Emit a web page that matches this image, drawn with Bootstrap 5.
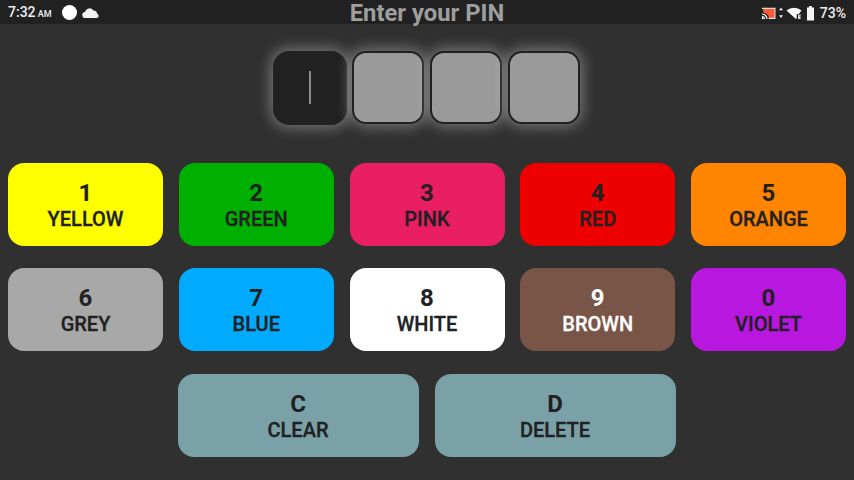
<!DOCTYPE html>
<html><head><meta charset="utf-8">
<link href="https://cdn.jsdelivr.net/npm/bootstrap@5.3.0/dist/css/bootstrap.min.css" rel="stylesheet">
<style>
html,body{margin:0;height:480px;overflow:hidden;background:#303030;font-family:Roboto,sans-serif}
.stat{height:24px;background:#212121;color:#eee;padding:0 8px}
.sideL,.sideR{flex:1 1 0;font-size:14px;font-weight:500;line-height:18px;padding-top:1px}
.clock small{font-size:9px;font-weight:500}
.ttl{font-size:23.800px;font-weight:700;color:#9e9e9e;line-height:28px;height:28px;text-align:center;white-space:nowrap;margin-top:-1.500px;margin-bottom:-2.500px}
.pinrow{padding-top:27px;height:138.500px;gap:6px}
.pinbox{width:72px;height:73px;border:2px solid #212121;border-radius:14px;background:#9a9a9a;box-shadow:0 0 14px 3px rgba(255,255,255,.33)}
.pinbox.act{background:#212121;width:74px;height:74px;margin-right:-1px;margin-left:-1px;margin-top:-.5px;border-radius:16px;border-color:#222}
.caret{width:2px;height:33px;background:#8a8a8a}
.keys{padding:0 8px;gap:22.500px}
.keyline{gap:15.750px}
.keyline3{justify-content:center;gap:16px;margin-left:-1px}
.kbtn{width:155px;height:83px;border-radius:16px;font-weight:700;color:#212121;padding-top:17px;text-align:center;flex:none}
.kbtn .dg{display:block;font-size:24px;line-height:26px}
.kbtn .lb{display:block;font-size:20px;line-height:26px;font-weight:500;-webkit-text-stroke:.3px currentColor}
.kbtn.wide{width:241px;background:#7aa0a8}
.wl{color:#fff}
.b1{background:#ff0}.b2{background:#00b000}.b3{background:#e91e63}.b4{background:#e00}.b5{background:#ff8400}
.b6{background:#a8a8a8}.b7{background:#0af}.b8{background:#fff}.b9{background:#795548}.b0{background:#b817e0}
</style></head><body>
<div class="stat d-flex">
<div class="sideL d-flex align-items-center" style="gap:10px">
<div class="clock">7:32<small> AM</small></div>
<svg width="38" height="16" viewBox="0 0 38 16"><circle cx="7.500" cy="7.500" r="7.500" fill="#fff"/><path d="M23.500 13a3 3 0 0 1-.4-6 4.500 4.500 0 0 1 8.300-1.400 3.600 3.600 0 0 1 3.900 3.500 2 2 0 0 1-.5 3.900z" fill="#f2f2f2"/></svg>
</div>
<div class="ttl">Enter your PIN</div>
<div class="sideR d-flex align-items-center justify-content-end">
<svg width="56" height="16" viewBox="0 0 56 16" style="margin-right:3px">
<path d="M2 3.500h11.500v9.500H8a5.500 5.500 0 0 0-5.500-5z" fill="#ff5a36"/>
<path d="M1 4V2.800h13.500V14H7.500v-1.200h5.800V4z" fill="#ddd"/>
<path d="M1 9a5 5 0 0 1 5 5M1 11.500a2.500 2.500 0 0 1 2.500 2.500" stroke="#fff" stroke-width="1.200" fill="none"/><circle cx="1.700" cy="13.300" r="1" fill="#fff"/>
<path d="M20 2.500l2 2.800h-4zM20 13l2-2.800h-4z" fill="#eee"/>
<path d="M25.500 5.500a12 12 0 0 1 15 0l-2.800 3.400h-2v4l-.8 1z" fill="#fff"/><path d="M37 9.500h3l-.5 1.200H38v.6h1.500v2.700H37z" fill="#ddd"/>
<path d="M48 1h2.800v1.500H53v13h-7V2.500h2z" fill="#f5f5f5"/>
</svg>
<span>73%</span>
</div>
</div>
<div class="d-flex justify-content-center pinrow">
<div class="pinbox act d-flex align-items-center justify-content-center"><div class="caret"></div></div>
<div class="pinbox"></div><div class="pinbox"></div><div class="pinbox"></div>
</div>
<div class="keys d-flex flex-column">
<div class="d-flex keyline">
<div class="kbtn b1"><span class="dg">1</span><span class="lb">YELLOW</span></div>
<div class="kbtn b2"><span class="dg">2</span><span class="lb">GREEN</span></div>
<div class="kbtn b3"><span class="dg">3</span><span class="lb">PINK</span></div>
<div class="kbtn b4"><span class="dg">4</span><span class="lb">RED</span></div>
<div class="kbtn b5"><span class="dg">5</span><span class="lb">ORANGE</span></div></div>
<div class="d-flex keyline">
<div class="kbtn b6"><span class="dg">6</span><span class="lb">GREY</span></div>
<div class="kbtn b7"><span class="dg">7</span><span class="lb">BLUE</span></div>
<div class="kbtn b8"><span class="dg">8</span><span class="lb">WHITE</span></div>
<div class="kbtn b9 wl"><span class="dg">9</span><span class="lb">BROWN</span></div>
<div class="kbtn b0"><span class="dg">0</span><span class="lb">VIOLET</span></div></div>
<div class="d-flex keyline keyline3">
<div class="kbtn wide"><span class="dg">C</span><span class="lb">CLEAR</span></div>
<div class="kbtn wide"><span class="dg">D</span><span class="lb">DELETE</span></div></div>
</div>
</body></html>
